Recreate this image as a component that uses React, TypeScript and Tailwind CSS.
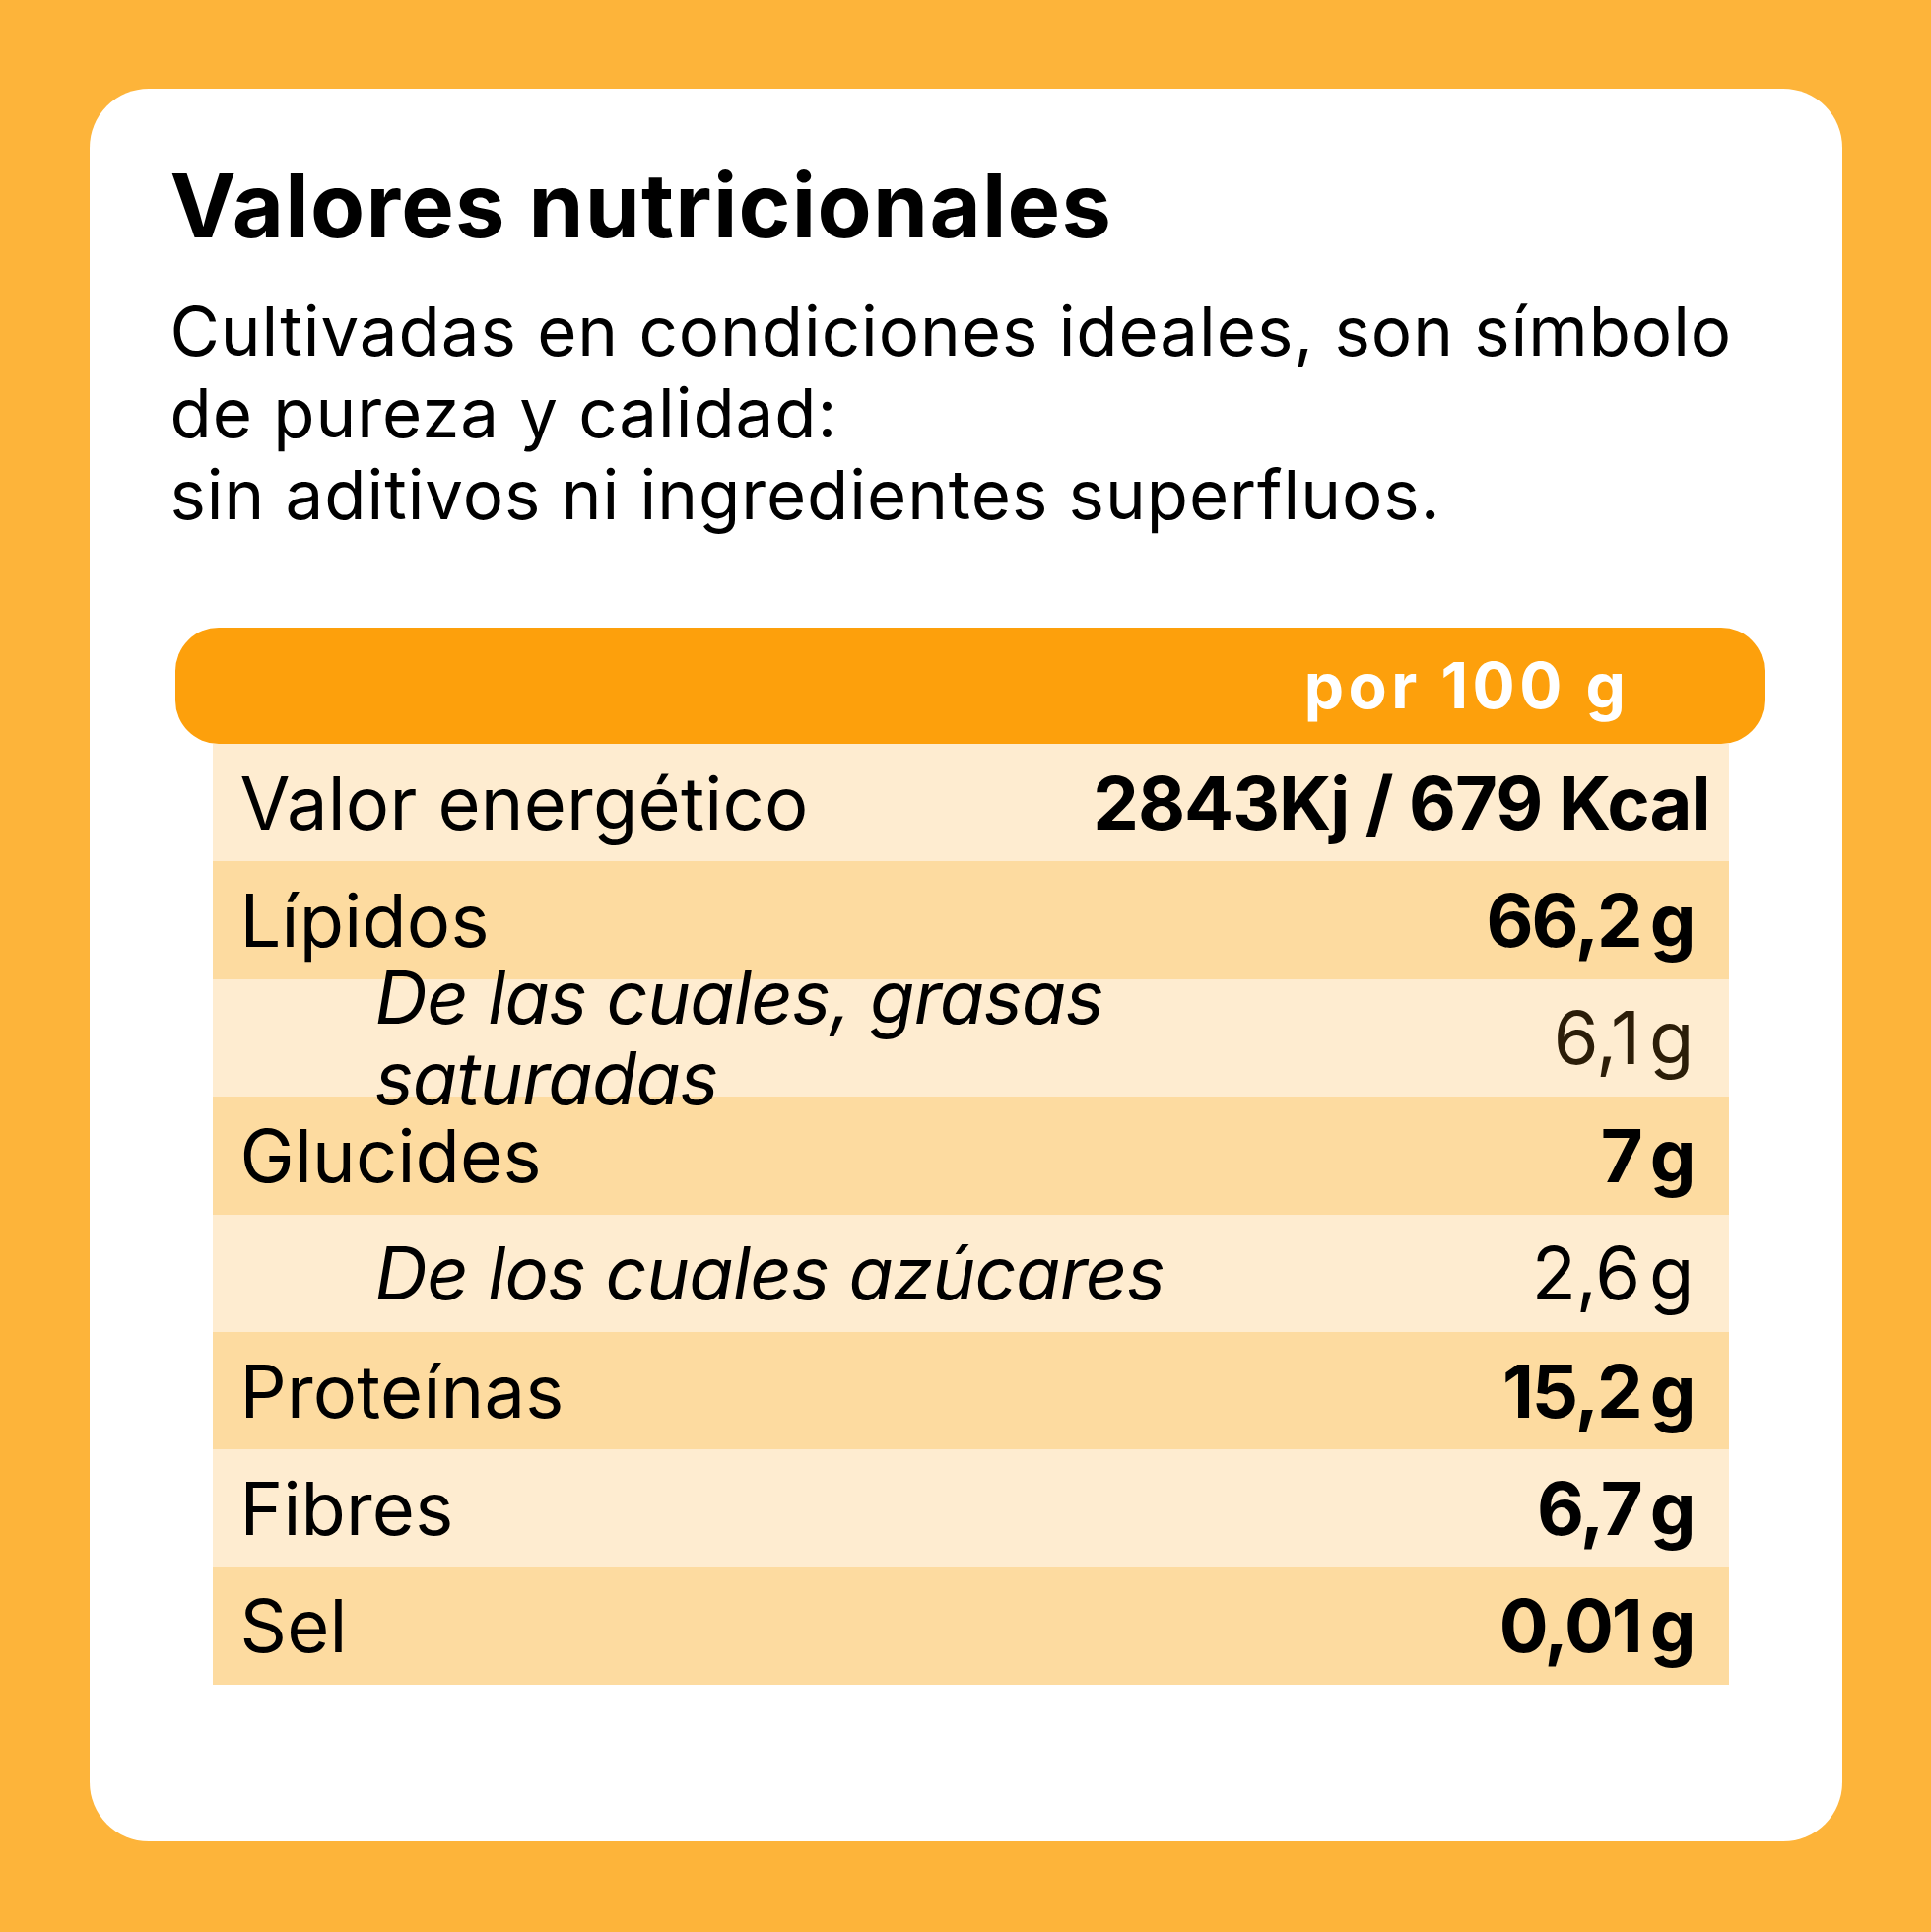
const rows = [
  { label: 'Valor energético', value: '2843Kj / 679 Kcal', dark: false, bold: true, energy: true },
  { label: 'Lípidos', value: '66,2', dark: true, bold: true },
  { label: 'De las cuales, grasas', label2: 'saturadas', value: '6,1', dark: false, sub: true, brown: true },
  { label: 'Glucides', value: '7', dark: true, bold: true },
  { label: 'De los cuales azúcares', value: '2,6', dark: false, sub: true },
  { label: 'Proteínas', value: '15,2', dark: true, bold: true },
  { label: 'Fibres', value: '6,7', dark: false, bold: true },
  { label: 'Sel', value: '0,01', dark: true, bold: true },
];

type Row = (typeof rows)[number] & { label2?: string; sub?: boolean; brown?: boolean; energy?: boolean };

function NutritionRow({ row }: { row: Row }) {
  return (
    <div
      className={`flex h-[119.4px] items-center justify-between ${row.dark ? 'bg-[#fddba0]' : 'bg-[#feecd0]'} ${row.energy ? 'pr-[19px]' : 'pr-[35px]'}`}
    >
      {row.sub ? (
        <div className="relative z-10 pl-[165px] text-[74px] italic leading-[82px] tracking-[-0.7px] text-black">
          {row.label}
          {row.label2 && (
            <>
              <br />
              {row.label2}
            </>
          )}
        </div>
      ) : (
        <div className="pl-[28px] text-[74px] leading-none tracking-[0.2px] text-black">{row.label}</div>
      )}
      {row.energy ? (
        <div className="text-[74px] font-bold leading-none tracking-[-1px] text-black">{row.value}</div>
      ) : (
        <div
          className={`flex text-[74px] leading-none ${row.bold ? 'font-bold tracking-[-2px]' : 'tracking-[0px]'} ${row.brown ? 'text-[#2b1d08]' : 'text-black'}`}
        >
          <span>{row.value}</span>
          <span className="ml-[9px]">g</span>
        </div>
      )}
    </div>
  );
}

export default function App() {
  return (
    <div className="flex h-[1961px] w-[1960px] items-start justify-center bg-[#fdb43a] pt-[90px] font-['Inter',sans-serif]">
      <div className="flex h-[1779px] w-[1779px] flex-col rounded-[60px] bg-white pl-[82px]">
        <h1 className="mt-[74px] text-[90px] font-bold leading-[90px] tracking-[1.3px] text-black">
          Valores nutricionales
        </h1>
        <p className="mt-[41px] text-[69px] leading-[83px] tracking-[0.95px] text-black">
          Cultivadas en condiciones ideales, son símbolo
          <br />
          de pureza y calidad:
          <br />
          sin aditivos ni ingredientes superfluos.
        </p>

        <div className="mt-[93px] flex flex-col">
          <div className="ml-[5px] flex h-[118px] w-[1613px] items-center justify-end rounded-[44px] bg-[#fda00c] pr-[136px]">
            <span className="text-[64px] font-bold leading-none tracking-[4.5px] text-white">por 100 g</span>
          </div>
          <div className="ml-[43px] flex w-[1539px] flex-col">
            {rows.map((row) => (
              <NutritionRow key={row.label} row={row as Row} />
            ))}
          </div>
        </div>
      </div>
    </div>
  );
}
